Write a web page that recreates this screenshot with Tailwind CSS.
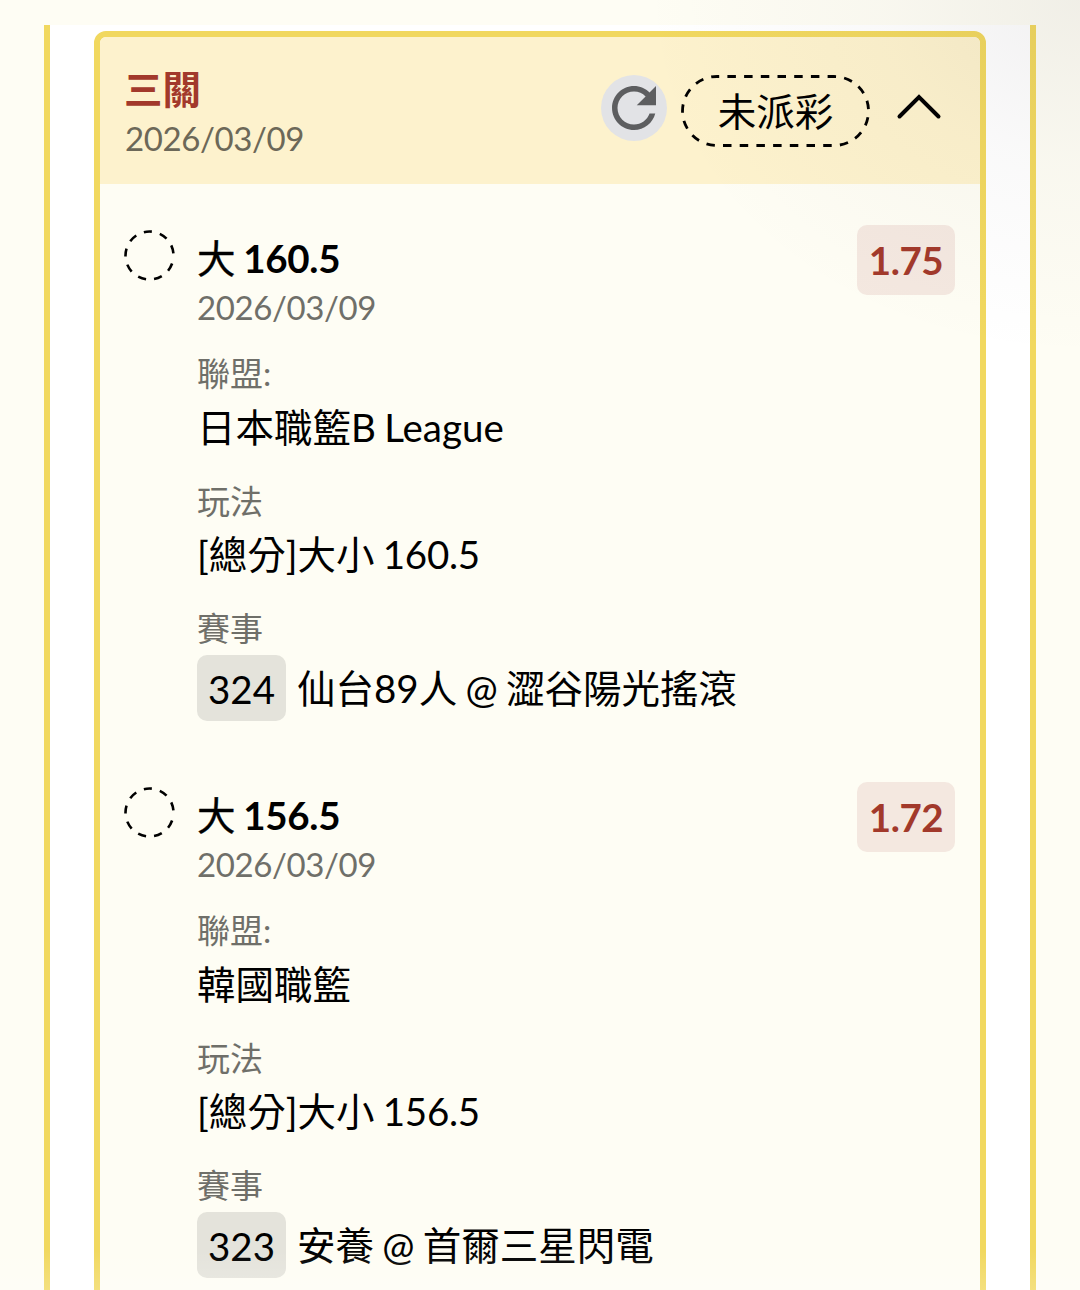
<!DOCTYPE html>
<html lang="zh-Hant">
<head>
  <meta charset="UTF-8" />
  <meta name="viewport" content="width=device-width, initial-scale=1" />
  <title>三關 2026/03/09</title>
  <script src="https://cdn.jsdelivr.net/npm/@tailwindcss/browser@4"></script>
</head>

<body class="relative h-[1290px] overflow-hidden bg-[#fefdf4] pt-[25px] px-11 font-['Lato','Noto_Sans_CJK_TC',sans-serif] text-[38.5px] text-black [word-spacing:-1.6px]">

  <div class="h-[1265px] border-x-6 border-[#f1d85f] bg-white px-11 pt-1.5">
    <section class="h-[1300px] rounded-t-xl border-6 border-[#f1d85f] bg-[#fefdf4]">

      <!-- Header -->
      <header class="flex h-[147px] items-start rounded-t-md bg-[#fdf2cd] pl-[25px]">
        <div class="w-[476px] pt-[26px]">
          <h1 class="-ml-px h-[52px] font-bold leading-[52px] text-[#a2392b]">三關</h1>
          <p class="h-[46px] text-[33px] leading-[46px] tracking-[-0.4px] text-[#6c6858]">2026/03/09</p>
        </div>
        <button class="mt-[38px] size-[66px] rounded-full bg-[#e2e3e6] text-[#5d5e60]">
          <svg class="size-[66px]" viewBox="0 0 24 24" fill="currentColor">
            <path d="M17.65 6.35C16.2 4.9 14.21 4 12 4c-4.42 0-7.99 3.58-7.99 8s3.57 8 7.99 8c3.73 0 6.84-2.55 7.73-6h-2.08c-.82 2.33-3.04 4-5.65 4-3.31 0-6-2.69-6-6s2.69-6 6-6c1.66 0 3.14.69 4.22 1.78L13 11h7V4l-2.35 2.35z" />
          </svg>
        </button>
        <div class="relative mt-[38px] ml-[14px] h-[72px] w-[189px] text-center leading-[72px]">
          <svg class="absolute inset-0" width="189" height="72" fill="none">
            <rect x="1.5" y="1.5" width="186" height="69" rx="34.5" stroke="#000" stroke-width="2.8" stroke-dasharray="8.5 8.2" stroke-dashoffset="6.3" />
          </svg>
          未派彩
        </div>
        <svg class="mt-[55px] ml-[26px]" width="46" height="30" fill="none">
          <path d="M3.5 24.5 23 5l19.5 19.5" stroke="#000" stroke-width="4" stroke-linecap="round" />
        </svg>
      </header>

      <!-- Leg 1 -->
      <article class="flex h-[557px] items-start pt-[41px] pr-[25px] pl-6">
        <svg class="mt-[5px]" width="51" height="51" fill="none">
          <circle cx="25.5" cy="25.5" r="24" stroke="#000" stroke-width="2.6" stroke-dasharray="8.2 8.2" stroke-dashoffset="8.2" />
        </svg>
        <div class="ml-[22px] flex-1">
          <h2 class="h-[58px] pt-2 font-bold leading-[50px]"><span class="font-normal [-webkit-text-stroke:0.4px]">大</span> <span class="tracking-[-0.3px]">160.5</span></h2>
          <p class="h-[48px] text-[33px] leading-[48px] tracking-[-0.4px] text-[#6f6f69]">2026/03/09</p>
          <p class="mt-[18px] h-[48px] text-[33px] leading-[48px] text-[#6f6f69]">聯盟:</p>
          <p class="h-[61px] leading-[61px]">日本職籃B League</p>
          <p class="mt-[19px] h-[48px] text-[33px] leading-[48px] text-[#6f6f69]">玩法</p>
          <p class="-mt-px h-[61px] leading-[61px]">[總分]大小 <span class="tracking-[-0.3px]">160.5</span></p>
          <p class="mt-[19px] h-[48px] text-[33px] leading-[48px] text-[#6f6f69]">賽事</p>
          <div class="mt-[3px] flex h-[66px] leading-[66px]">
            <span class="mr-[11px] w-[89px] rounded-[10px] bg-[#e4e3db] text-center leading-[68px]">324</span>
            <span>仙台89人 @ 澀谷陽光搖滾</span>
          </div>
        </div>
        <span class="h-[70px] w-[98px] rounded-[10px] bg-[#f4e8e0] text-center font-bold leading-[70px] tracking-[-0.4px] text-[#a2392b]">1.75</span>
      </article>

      <!-- Leg 2 -->
      <article class="flex h-[557px] items-start pt-[41px] pr-[25px] pl-6">
        <svg class="mt-[5px]" width="51" height="51" fill="none">
          <circle cx="25.5" cy="25.5" r="24" stroke="#000" stroke-width="2.6" stroke-dasharray="8.2 8.2" stroke-dashoffset="8.2" />
        </svg>
        <div class="ml-[22px] flex-1">
          <h2 class="h-[58px] pt-2 font-bold leading-[50px]"><span class="font-normal [-webkit-text-stroke:0.4px]">大</span> <span class="tracking-[-0.3px]">156.5</span></h2>
          <p class="h-[48px] text-[33px] leading-[48px] tracking-[-0.4px] text-[#6f6f69]">2026/03/09</p>
          <p class="mt-[18px] h-[48px] text-[33px] leading-[48px] text-[#6f6f69]">聯盟:</p>
          <p class="h-[61px] leading-[61px]">韓國職籃</p>
          <p class="mt-[19px] h-[48px] text-[33px] leading-[48px] text-[#6f6f69]">玩法</p>
          <p class="-mt-px h-[61px] leading-[61px]">[總分]大小 <span class="tracking-[-0.3px]">156.5</span></p>
          <p class="mt-[19px] h-[48px] text-[33px] leading-[48px] text-[#6f6f69]">賽事</p>
          <div class="mt-[3px] flex h-[66px] leading-[66px]">
            <span class="mr-[11px] w-[89px] rounded-[10px] bg-[#e4e3db] text-center leading-[68px]">323</span>
            <span>安養 @ 首爾三星閃電</span>
          </div>
        </div>
        <span class="h-[70px] w-[98px] rounded-[10px] bg-[#f4e8e0] text-center font-bold leading-[70px] tracking-[-0.4px] text-[#a2392b]">1.72</span>
      </article>
    </section>
  </div>

  <!-- Corner shade and bottom fade -->
  <div class="pointer-events-none absolute top-0 right-0 h-[360px] w-[440px] bg-[radial-gradient(ellipse_farthest-side_at_top_right,rgba(60,50,60,0.07),rgba(60,50,60,0.027)_45%,transparent)]"></div>
  <div class="pointer-events-none absolute inset-x-0 bottom-0 h-10 bg-linear-to-t from-white/20 to-transparent"></div>

</body>
</html>
